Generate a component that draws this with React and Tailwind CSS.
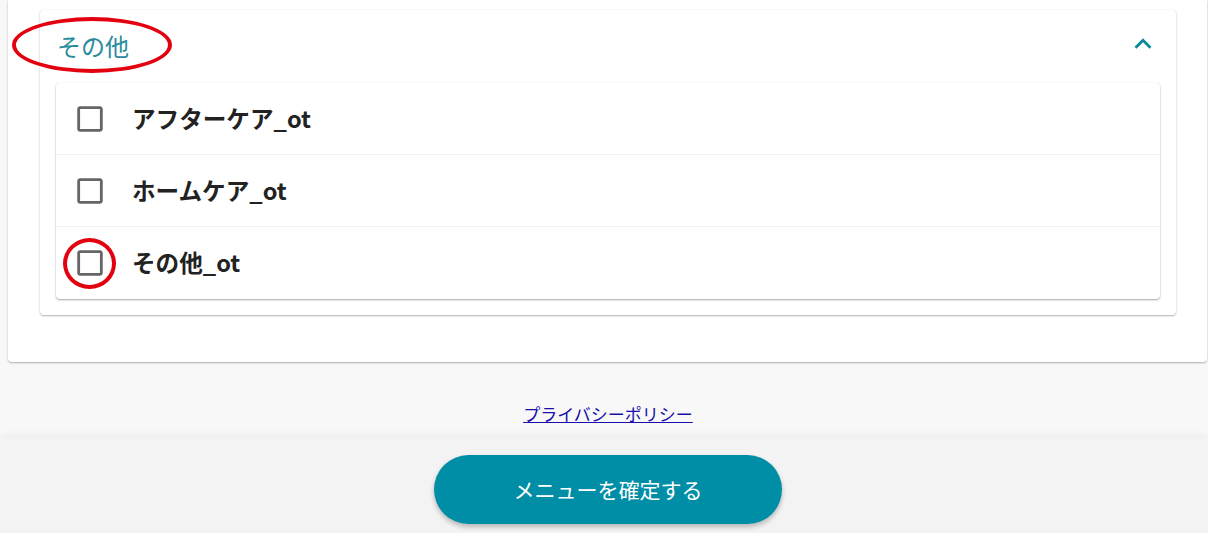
const items = ["アフターケア_ot", "ホームケア_ot", "その他_ot"];

const CheckboxIcon = () => (
  <svg viewBox="0 0 24 24" className="h-[34px] w-[34px] fill-[#666]">
    <path d="M19 5v14H5V5h14m0-2H5c-1.1 0-2 .9-2 2v14c0 1.1.9 2 2 2h14c1.1 0 2-.9 2-2V5c0-1.1-.9-2-2-2z" />
  </svg>
);

const ExpandLess = () => (
  <svg viewBox="0 0 24 24" className="h-[34px] w-[34px] fill-[#0b8a9c]">
    <path d="M12 8l-6 6 1.41 1.41L12 10.83l4.59 4.58L18 14z" />
  </svg>
);

export default function App() {
  return (
    <div
      className="flex h-[533px] flex-col overflow-hidden bg-[#f8f8f8]"
      style={{ fontFamily: '"Noto Sans CJK JP", "Noto Sans", sans-serif' }}
    >
      <div className="ml-[8px] mr-[1px] rounded-b-[4px] bg-white pl-[32px] pr-[31px] pt-[10px] pb-[47px] shadow-[0_1px_2px_rgba(0,0,0,0.3)]">
        <div className="rounded-[4px] bg-white px-[16px] pb-[16px] shadow-[0_1px_2px_rgba(0,0,0,0.3),0_0_1px_rgba(0,0,0,0.08)]">
          <div className="relative flex h-[73px] items-center justify-between pl-[1px] pr-0">
            <span className="mt-[-2px] text-[24px] leading-none text-[#2a8c9c]">その他</span>
            <span className="mt-[-6px]">
              <ExpandLess />
            </span>
            <div className="pointer-events-none absolute left-[-44px] top-[7px] h-[56px] w-[160px] rounded-[50%] border-[4px] border-[#e3000f]" />
          </div>
          <div className="rounded-[4px] bg-white shadow-[0_1px_2px_rgba(0,0,0,0.35),0_0_1px_rgba(0,0,0,0.1)]">
            {items.map((label, i) => (
              <div
                key={label}
                className={`relative flex h-[72px] items-center ${i < items.length - 1 ? "border-b border-[#f0f0f0]" : ""}`}
              >
                <span className="ml-[17px] flex">
                  <CheckboxIcon />
                </span>
                <span className="ml-[25px] text-[23.6px] font-bold text-[#222]">{label}</span>
                {i === items.length - 1 && (
                  <div className="pointer-events-none absolute left-[7px] top-[11px] h-[51px] w-[53px] rounded-[50%] border-[4px] border-[#e3000f]" />
                )}
              </div>
            ))}
          </div>
        </div>
      </div>
      <div className="flex h-[76px] justify-center pl-[8px] pt-[40px]">
        <a href="#" className="text-[17px] leading-[24px] text-[#1a0dab] underline">
          プライバシーポリシー
        </a>
      </div>
      <div className="flex flex-1 justify-center bg-[#f3f3f3] pl-[8px] pt-[17px] shadow-[0_-3px_8px_rgba(0,0,0,0.05)]">
        <button className="h-[69px] w-[348px] rounded-full bg-[#008ea6] text-[21px] text-white shadow-[0_3px_5px_rgba(0,0,0,0.25)]">
          メニューを確定する
        </button>
      </div>
    </div>
  );
}
